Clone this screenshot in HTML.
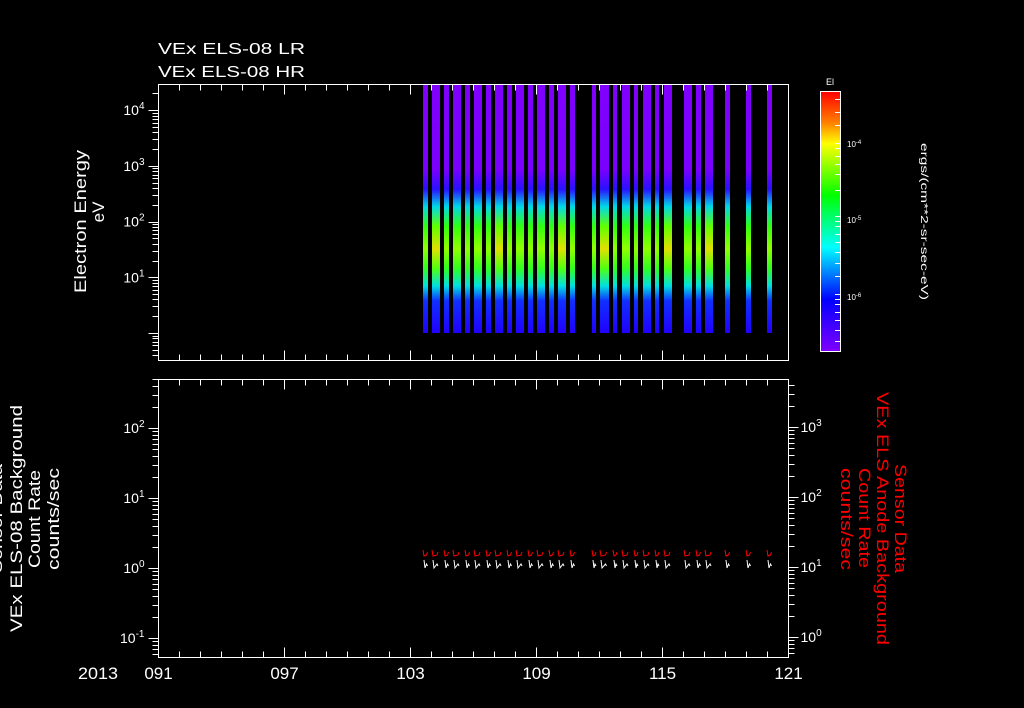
<!DOCTYPE html>
<html><head><meta charset="utf-8"><style>
html,body{margin:0;padding:0;background:#000;width:1024px;height:708px;overflow:hidden}
svg{display:block}
text{font-family:"Liberation Sans",sans-serif;fill:#fff}
</style></head><body>
<svg id="s" width="1024" height="708" viewBox="0 0 1024 708" xmlns="http://www.w3.org/2000/svg">
<defs>
<linearGradient id="spec" x1="0" y1="0" x2="0" y2="1">
<stop offset="0" stop-color="#8000ff"/><stop offset="0.34" stop-color="#7a00ff"/>
<stop offset="0.42" stop-color="#2a10ff"/><stop offset="0.49" stop-color="#00d8e8"/>
<stop offset="0.57" stop-color="#30ff10"/><stop offset="0.66" stop-color="#90ff00"/>
<stop offset="0.74" stop-color="#30ff20"/><stop offset="0.81" stop-color="#00e0e0"/>
<stop offset="0.87" stop-color="#1030ff"/><stop offset="1" stop-color="#2000ff"/>
</linearGradient>
<linearGradient id="spec2" x1="0" y1="0" x2="0" y2="1">
<stop offset="0" stop-color="#8000ff"/><stop offset="0.34" stop-color="#7a00ff"/>
<stop offset="0.42" stop-color="#2a10ff"/><stop offset="0.49" stop-color="#00d8e8"/>
<stop offset="0.57" stop-color="#60ff00"/><stop offset="0.66" stop-color="#e0e000"/>
<stop offset="0.74" stop-color="#50ff10"/><stop offset="0.81" stop-color="#00e0e0"/>
<stop offset="0.87" stop-color="#1030ff"/><stop offset="1" stop-color="#2000ff"/>
</linearGradient>
<linearGradient id="cb" x1="0" y1="0" x2="0" y2="1">
<stop offset="0" stop-color="#ff0000"/><stop offset="0.12" stop-color="#ff8000"/>
<stop offset="0.2" stop-color="#ffff00"/><stop offset="0.4" stop-color="#00ff00"/>
<stop offset="0.6" stop-color="#00ffff"/><stop offset="0.8" stop-color="#0000ff"/>
<stop offset="1" stop-color="#8000ff"/>
</linearGradient>
</defs>
<text x="158" y="54" font-size="16" textLength="147" lengthAdjust="spacingAndGlyphs">VEx ELS-08 LR</text>
<text x="158" y="77" font-size="16" textLength="147" lengthAdjust="spacingAndGlyphs">VEx ELS-08 HR</text>
<g id="bars"></g>
<g id="ax" stroke="#fff" stroke-width="1" fill="none">
<rect x="158.5" y="84.5" width="630" height="276"/>
<rect x="158.5" y="379.5" width="630" height="278"/>
<rect x="820.5" y="91.5" width="20" height="260" fill="url(#cb)"/>
</g>
<g id="lbl" font-size="14"></g>
<text transform="translate(86,222) rotate(-90)" x="-71" font-size="17" textLength="143" lengthAdjust="spacingAndGlyphs">Electron Energy</text>
<text transform="translate(104,212) rotate(-90)" text-anchor="middle" font-size="17">eV</text>
<text x="830" y="85" font-size="9" text-anchor="middle">El</text>
<text x="847" y="147" font-size="8">10<tspan dy="-3" font-size="6">-4</tspan></text>
<text x="847" y="223" font-size="8">10<tspan dy="-3" font-size="6">-5</tspan></text>
<text x="847" y="300" font-size="8">10<tspan dy="-3" font-size="6">-6</tspan></text>
<text transform="translate(921,143) rotate(90)" font-size="10" textLength="157" lengthAdjust="spacingAndGlyphs">ergs/(cm**2-sr-sec-eV)</text>
<g font-size="17">
<text transform="translate(2,573) rotate(-90)" textLength="109" lengthAdjust="spacingAndGlyphs">Sensor Data</text>
<text transform="translate(22,632) rotate(-90)" textLength="227" lengthAdjust="spacingAndGlyphs">VEx ELS-08 Background</text>
<text transform="translate(40,568) rotate(-90)" textLength="98" lengthAdjust="spacingAndGlyphs">Count Rate</text>
<text transform="translate(59,570) rotate(-90)" textLength="102" lengthAdjust="spacingAndGlyphs">counts/sec</text>
</g>
<g font-size="17">
<text transform="translate(895,464) rotate(90)" style="fill:#f00" textLength="109" lengthAdjust="spacingAndGlyphs">Sensor Data</text>
<text transform="translate(877,392) rotate(90)" style="fill:#f00" textLength="253" lengthAdjust="spacingAndGlyphs">VEx ELS Anode Background</text>
<text transform="translate(859,468) rotate(90)" style="fill:#f00" textLength="100" lengthAdjust="spacingAndGlyphs">Count Rate</text>
<text transform="translate(841,468) rotate(90)" style="fill:#f00" textLength="102" lengthAdjust="spacingAndGlyphs">counts/sec</text>
</g>
<text x="78" y="679" font-size="17" textLength="40" lengthAdjust="spacingAndGlyphs">2013</text>
<g id="line" fill="none" stroke-width="1"></g>
</svg>
<script>
var NS="http://www.w3.org/2000/svg";
function el(p,t,a){var e=document.createElementNS(NS,t);for(var k in a)e.setAttribute(k,a[k]);p.appendChild(e);return e;}
var s=document.getElementById('s'),ax=document.getElementById('ax'),lbl=document.getElementById('lbl'),bars=document.getElementById('bars'),line=document.getElementById('line');
var B=[[423,427],[432,439],[444,448],[453,460],[465,469],[474,481],[486,490],[495,502],[507,511],[516,523],[528,532],[537,544],[549,553],[558,565],[570,574],[592,595],[600,608],[613,616],[622,629],[634,637],[643,650],[655,658],[664,671],[684,691],[696,700],[705,712],[725,729],[746,750],[767,771]];
B.forEach(function(b,i){
 var w=b[1]-b[0]+1;
 el(bars,'rect',{x:b[0],y:85,width:w,height:248,fill:(w>5&&i%3==1)?'url(#spec2)':'url(#spec)'});
 var cx=b[0]+w/2;
 el(line,'polyline',{points:(b[0])+',550 '+(b[0]+1)+',556 '+(cx+1)+',555 '+(cx+2)+',552','stroke':'#f00'});
 el(line,'polyline',{points:(b[0]+1)+',560 '+(b[0]+2)+',568 '+(cx+1)+',564 '+(cx+2)+',566','stroke':'#fff'});
});
function L(x1,y1,x2,y2){el(ax,'line',{x1:x1,y1:y1,x2:x2,y2:y2});}
for(var d=0;d<=30;d++){var x=158.5+d*630/30;var len=(d%6==0)?10:6;
 L(x,84.5,x,84.5+len);L(x,360.5,x,360.5-len);L(x,379.5,x,379.5+len);L(x,657.5,x,657.5-len);
 if(d%6==0){var t=el(s,'text',{x:x,y:679,'font-size':17,'text-anchor':'middle'});t.textContent=['091','097','103','109','115','121'][d/6];}}
function logax(y0,dec,top,bot,ax0,dir,exps){
 for(var e=-3;e<=6;e++)for(var k=1;k<10;k++){var y=y0-(e+Math.log10(k))*dec;if(y<top||y>bot)continue;
  var len=k==1?10:6;L(ax0,Math.round(y)+.5,ax0+dir*len,Math.round(y)+.5);}
 exps.forEach(function(e){var y=y0-e[0]*dec;var t;
  if(dir<0){t=el(lbl,'text',{x:ax0-14,y:y+5,'text-anchor':'end'});}else{t=el(lbl,'text',{x:ax0+12,y:y+5});}
  t.innerHTML='10<tspan dy="-6" font-size="10">'+e[1]+'</tspan>';});
}
logax(277.3+55.7,55.7,84,361,158.5,-1,[[1,'1'],[2,'2'],[3,'3'],[4,'4']]);
logax(568,70,379,658,158.5,-1,[[-1,'-1'],[0,'0'],[1,'1'],[2,'2']]);
logax(637,70,379,658,788.5,1,[[0,'0'],[1,'1'],[2,'2'],[3,'3']]);
[0.03,0.08,0.13,0.2,0.22,0.25,0.28,0.32,0.38,0.48,0.5,0.52,0.55,0.58,0.62,0.66,0.71,0.78,0.8,0.82,0.85,0.88,0.92,0.96].forEach(function(f){var y=Math.round(91+f*260)+.5;L(835,y,840,y);});
</script>
</body></html>
